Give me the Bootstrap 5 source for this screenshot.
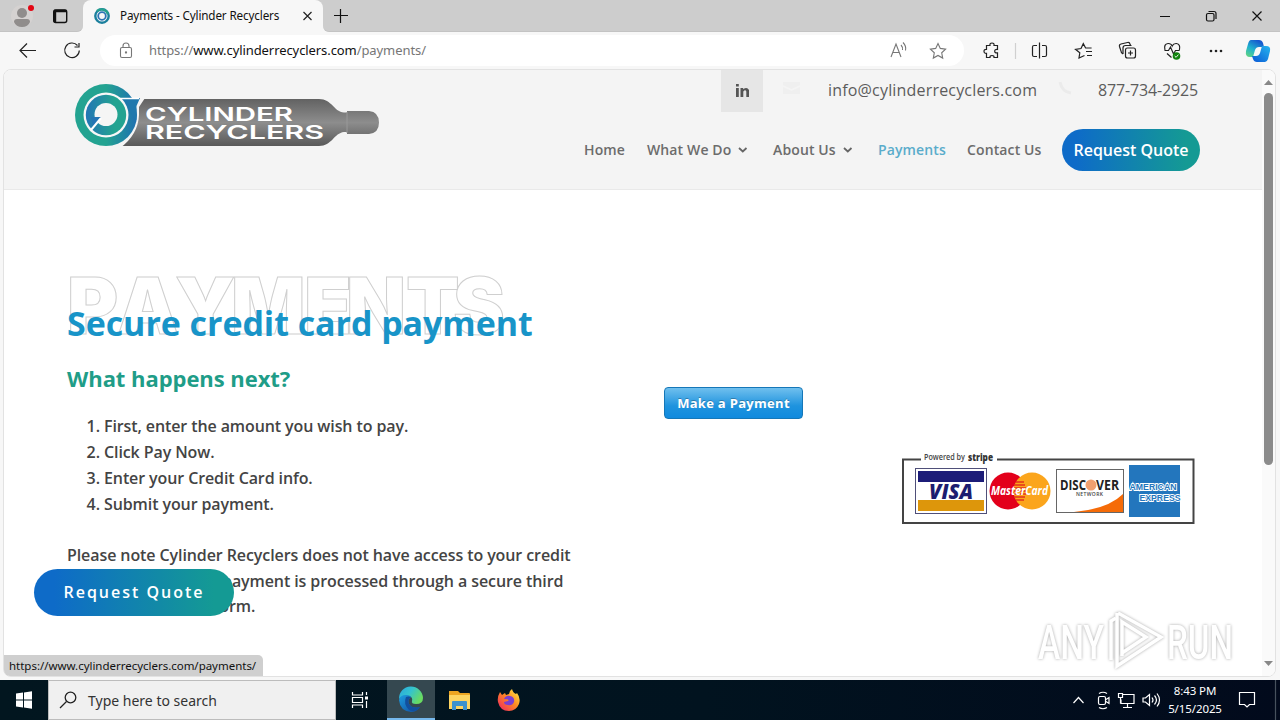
<!DOCTYPE html>
<html lang="en">

<head>
    <meta charset="UTF-8" />
    <meta name="viewport" content="width=device-width, initial-scale=1.0" />
    <title>Payments - Cylinder Recyclers</title>

    <link href="https://cdn.jsdelivr.net/npm/bootstrap@5.3.3/dist/css/bootstrap.min.css" rel="stylesheet">
    <style>
        body { width: 1280px; height: 720px; overflow: hidden; font-family: "Open Sans", "Noto Sans", sans-serif; background: #f7f7f7; color: #444; }
        svg { display: block; flex: none; overflow: visible; }
        .ui-text { font-family: "Noto Sans", "Open Sans", sans-serif; white-space: nowrap; }

        /* browser chrome */
        .tab-strip { height: 32px; background: #cdcdcd; flex: none; }
        .tab-left { width: 83px; border-radius: 0 0 6px 0; border-bottom: 1px solid #c3c3c3; background: #cdcdcd; }
        .tab-back { background: #f7f7f7; }
        .tab-active { width: 240px; background: #f7f7f7; border-radius: 8px 8px 0 0; color: #111; font-size: 11.7px; letter-spacing: -.14px; }
        .tab-title { width: 182px; }
        .tab-rest { border-radius: 0 0 0 6px; border-bottom: 1px solid #c3c3c3; background: #cdcdcd; }
        .tool-bar { height: 37px; flex: none; background: #f7f7f7; }
        .address { width: 864px; height: 31px; margin-top: 3px; border-radius: 16px; background: #fff; font-size: 13px; letter-spacing: -.08px; color: #767676; }
        .address b { font-weight: 400; color: #111; }
        .url { width: 742px; padding-top: 1px; }

        /* page frame */
        .frame { width: 1273px; height: 608px; margin-left: 3px; flex: none; border: 1px solid #e2e2e2; border-radius: 8px; background: #fff; overflow: hidden; }
        .page { width: 1258px; }
        .scroll { width: 13px; background: #fafafa; padding-top: 9px; }
        .scroll-thumb { width: 9px; height: 372px; border-radius: 5px; background: #8b8b8b; margin-top: 8px; margin-left: 2px; }
        .site-head { height: 120px; background: #f4f4f4; border-bottom: 1px solid #e9e9e9; }
        .logo-cell { width: 580px; flex: none; padding: 11px 0 0 69px; }
        .contact-bar { height: 42px; font-size: 16px; color: #5c5c5c; padding-left: 137px; white-space: nowrap; }
        .social { width: 42px; height: 42px; background: #e6e6e6; }
        .mail-text { width: 230px; letter-spacing: .18px; padding-bottom: 2px; }
        .phone-text { letter-spacing: -.15px; padding-bottom: 2px; }
        .menu { display: grid; grid-template-columns: 63px 126px 105px 89px 95px 138px; align-items: center; font-size: 14px; font-weight: 600; color: #6c6c6c; margin-top: 17px; white-space: nowrap; letter-spacing: .12px; }
        .menu > span:not(.pill) { padding-bottom: 2px; }
        .menu .current { color: #5aaccb; }
        .pill { background: linear-gradient(90deg, #0e6bc8 10%, #149a94 90%); color: #fff; border-radius: 30px; text-align: center; white-space: nowrap; }
        .pill-top { height: 42px; line-height: 42px; font-size: 16px; letter-spacing: 0; }
        .pill-float { position: absolute; left: 34px; top: 569px; width: 200px; height: 47px; line-height: 46px; font-size: 16px; letter-spacing: 2px; font-weight: 600; }

        .main-row { padding-left: 63px; padding-top: 77px; }
        .left-col { width: 597px; }
        .ghost-title { font-family: Inter, sans-serif; font-weight: 900; font-size: 78px; fill: none; stroke: #cfcfcf; stroke-width: 1px; }
        .blue-title { font-size: 34px; font-weight: 700; line-height: 40px; letter-spacing: -.06px; color: #1894c8; margin: -42px 0 0; white-space: nowrap; position: relative; }
        .green-title { font-size: 22px; font-weight: 700; line-height: 28px; letter-spacing: -.05px; color: #1f9d88; margin: 21px 0 0; }
        .steps { font-size: 16px; font-weight: 600; line-height: 26px; letter-spacing: -.1px; margin: 21px 0 0; padding-left: 37px; }
        .note { font-size: 16px; font-weight: 600; line-height: 25.6px; letter-spacing: -.09px; margin: 26px 0 0; width: 525px; }
        .pay-btn { width: 139px; height: 32px; line-height: 30px; margin-top: 120px; border: 1px solid #1577b8; border-radius: 4px; background: linear-gradient(#70c0ee, #1e93de 60%, #108ade); color: #fff; font-size: 13px; letter-spacing: .3px; font-weight: 700; text-align: center; text-shadow: 0 -1px 0 rgba(0, 0, 0, .25); padding: 0; }
        .cards-img { margin: 31px 0 0 237px; }
        .watermark { position: absolute; left: 1030px; top: 604px; filter: drop-shadow(0 0 1.5px #a8a8a8); }
        .link-hint { position: absolute; left: 4px; top: 655px; width: 259px; height: 21px; line-height: 21px; padding-left: 5px; background: #cfcfcf; border-radius: 0 5px 0 6px; font-size: 11.5px; letter-spacing: -.02px; color: #111; }

        /* taskbar */
        .task-bar { height: 40px; background: linear-gradient(90deg, #02161f, #01131f 55%, #020a1c); margin-top: 3px; flex: none; }
        .search-box { width: 288px; background: #f0f0f0; border: 1px solid #bcbcbc; color: #333; font-size: 14px; }
        .app-cell { width: 49px; }
        .app-on { width: 48px; background: #354850; border-bottom: 2px solid #76b9ed; }
        .clock { width: 66px; font-size: 11.5px; letter-spacing: -.1px; line-height: 18px; color: #fff; text-align: center; }
    </style>
</head>

<body class="d-flex flex-column">
    <div class="tab-strip d-flex">
        <div class="tab-back"><div class="tab-left h-100">
            <svg width="83" height="31" fill="none">
                <circle cx="22" cy="16" r="11" fill="#d5d2d1" />
                <circle cx="22" cy="13" r="5" fill="#908d8c" />
                <path d="M14 22q0-3 3-3h10q3 0 3 3-2 5-8 5t-8-5z" fill="#908d8c" />
                <circle cx="31" cy="8" r="3" fill="#e30613" />
                <rect x="53.700" y="10" width="13" height="12.500" rx="2" stroke="#111" stroke-width="1.400" />
                <path d="M54 11h12.500M55 11v11" stroke="#111" stroke-width="2.400" />
            </svg>
        </div></div>
        <div class="tab-active d-flex align-items-center ui-text">
            <svg width="37" height="32" fill="none">
                <circle cx="19" cy="16" r="6.700" stroke="#1b7f9d" stroke-width="2.400" />
                <path d="M14 11a7 7 0 0 1 11 3" stroke="#24a08f" stroke-width="2.400" />
                <circle cx="19" cy="16" r="3.800" stroke="#2c74b4" stroke-width="1.800" />
            </svg>
            <span class="tab-title">Payments - Cylinder Recyclers</span>
            <svg width="12" height="12" stroke="#222" stroke-width="1.200"><path d="M1.500 2l8 8m0-8l-8 8" /></svg>
        </div>
        <div class="tab-back flex-grow-1"><div class="tab-rest h-100">
            <svg width="957" height="31" fill="none" stroke="#111" stroke-width="1.200">
                <path d="M11 15.500h14M17.500 9v14M837 16.500h10M929.500 11.500l9 9m0-9l-9 9" />
                <rect x="883.500" y="13.500" width="7.500" height="7.500" rx="1.500" />
                <path d="M885.500 11.500h5.500q2 0 2 2v5.500" />
            </svg>
        </div></div>
    </div>

    <div class="tool-bar d-flex">
        <svg width="100" height="37" fill="none" stroke="#222" stroke-width="1.200">
            <path d="M36 18.500H20.500m6.500-7l-7 7 7 7" />
            <path d="M77.500 13.500a7.300 7.300 0 1 0 1.800 5M79 11v4h-4.500" />
        </svg>
        <div class="address d-flex align-items-center ui-text">
            <svg width="49" height="31" fill="none" stroke="#777" stroke-width="1.100">
                <rect x="20.500" y="12.500" width="11" height="10" rx="1.500" />
                <path d="M23 12.500V11a3 3 0 0 1 6 0v1.500" />
                <circle cx="26" cy="17.500" r=".6" fill="#777" />
            </svg>
            <span class="url">https://<b>www.cylinderrecyclers.com</b>/payments/</span>
            <svg width="73" height="31" fill="none" stroke="#777" stroke-width="1.100">
                <path d="M0 22l5-13 5 13M2 17.500h6M10 10q2 2 1.500 5M12 7.500q3.500 3.500 2.500 8" />
                <path d="M47 8.500l2.300 4.900 5.300.7-3.900 3.700 1 5.300-4.700-2.600-4.700 2.600 1-5.300-3.900-3.700 5.300-.7z" />
            </svg>
        </div>
        <svg width="316" height="37" fill="none" stroke="#222" stroke-width="1.200">
            <path d="M22.500 13.500h3.500q-.5-2.500 2-2.500t2 2.500h3.500v4q-2.800-.3-2.800 1.700t2.800 1.700v4.600H30q.3-2-2-2t-2 2h-3.500v-4.200q-2.500.2-2.500-2t2.500-2z" />
            <path d="M51.500 11v16" stroke="#d0d0d0" />
            <path d="M73 13.500h-3q-1.500 0-1.500 1.500v8q0 1.500 1.500 1.500h3M78 13.500h3q1.500 0 1.500 1.500v8q0 1.500-1.500 1.500h-3M75.500 10.500v16" />
            <path d="M120.500 23.500l-5.500 2.500.8-5.200-4.300-3.500 5.500-.8 2.300-4.800 2.300 4.300h6M122 19.500h6M123 23.500h5" />
            <rect x="161.500" y="16" width="10" height="10" rx="2" />
            <path d="M166.500 18.500v5M164 21h5M159 22q-2-1-2-3l-1.500-4.500q-.5-2 1.500-2.500l6.500-1.500q2-.5 2.500 1.500l.5 1.500M159 22v-6q0-2.500 2.500-2.500h6" />
            <path d="M201 18q-1.500-6 3-6.500 3-.2 4.200 2.500 1.300-2.700 4.200-2.500 4.400.6 3 6.500M200.500 18.500h4l2-3.500 3 7 2-3.500h4M203 21.500l4.500 4" />
            <circle cx="212.500" cy="24" r="3.800" fill="#11820e" stroke="none" />
            <path d="M210.700 24l1.400 1.300 2.300-2.700" stroke="#fff" stroke-width=".9" />
            <g fill="#222" stroke="none"><circle cx="247" cy="19" r="1.300" /><circle cx="252" cy="19" r="1.300" /><circle cx="257" cy="19" r="1.300" /></g>
            <defs>
                <linearGradient id="cpA" x1="0" y1="1" x2=".6" y2="0"><stop offset="0" stop-color="#69d878" /><stop offset=".5" stop-color="#20b2ce" /><stop offset="1" stop-color="#1659cf" /></linearGradient>
                <linearGradient id="cpB" x1="0" y1="1" x2="1" y2="0"><stop offset="0" stop-color="#0b58d5" /><stop offset="1" stop-color="#26b5ee" /></linearGradient>
            </defs>
            <path d="M287 8h8q3 0 4 3l1 4h-5q-3 0-4 3l-2 7h-3q-5 0-4-6l2-7q1-4 3-4z" fill="url(#cpA)" stroke="none" />
            <path d="M301 30h-8q-3 0-4-3l-1-3h4q3 0 4-3l2-7h4q5 0 4 5l-2 8q-1 3-3 3z" fill="url(#cpB)" stroke="none" />
        </svg>
    </div>

    <div class="frame d-flex">
        <main class="page">
            <header class="site-head d-flex">
                <div class="logo-cell">
                    <svg width="310" height="70" viewBox="73 81 310 70">
                        <defs>
                            <linearGradient id="tank" x1="0" y1="0" x2="0" y2="1"><stop offset="0" stop-color="#626262" /><stop offset=".5" stop-color="#8d8d8d" /><stop offset="1" stop-color="#595959" /></linearGradient>
                            <linearGradient id="ring" x1="0" y1="0" x2="1" y2="0"><stop offset=".5" stop-color="#23a391" /><stop offset="1" stop-color="#1f70b1" /></linearGradient>
                            <linearGradient id="ringIn" x1="0" y1="0" x2="1" y2="0"><stop offset="0" stop-color="#2375b5" /><stop offset=".7" stop-color="#23a391" /></linearGradient>
                        </defs>
                        <path d="M122 99H319C332 99 334 112 344 112.500H347V111H369Q379 112 379 122.500T369 134H347V132H344C334 133 332 146 319 146H122z" fill="url(#tank)" />
                        <path d="M347 112v21" stroke="#999" stroke-width="1" />
                        <path d="M106 82V148h14q18-13 19-33v-8l6-9-24-1z" fill="#f4f4f4" />
                        <path d="M125 146q13-11 15-29v-10l7-8h8v47z" fill="url(#tank)" />
                        <circle cx="106" cy="115" r="31" fill="url(#ring)" />
                        <path d="M121 98H140L136.500 106V120L128 110z" fill="#1f78ad" />
                        <circle cx="106" cy="115" r="22.500" fill="#f7f7f7" />
                        <path d="M119 98.500h20" stroke="#fff" stroke-width="1.500" />
                        <circle cx="106" cy="115" r="20.200" fill="url(#ringIn)" />
                        <circle cx="106" cy="114.500" r="11.500" fill="#f5f5f5" />
                        <path d="M91 117h10l-8 10z" fill="#2375b5" />
                        <path d="M91 130l10-12" stroke="#fff" stroke-width="2" />
                        <g fill="#fff" font-family="Inter, sans-serif" font-size="19" font-weight="600">
                            <text x="145" y="120.500" textLength="148" lengthAdjust="spacingAndGlyphs">CYLINDER</text>
                            <text x="145" y="138.500" textLength="179" lengthAdjust="spacingAndGlyphs">RECYCLERS</text>
                        </g>
                    </svg>
                </div>
                <div>
                    <div class="contact-bar d-flex align-items-center">
                        <div class="social"><svg width="42" height="42" fill="#555"><path d="M15 18h2.800v9H15zM15 14h2.800v2.500H15zM19.500 18h2.700v1.200q3.800-3 5.800.8v7h-2.700v-5.500q-1-2.700-3 0V27h-2.800z" /></svg></div>
                        <svg width="65" height="42" fill="#efefef"><path d="M20 12h17v3l-8.500 4-8.500-4zM20 17l8.500 4 8.500-4v7H20z" /></svg>
                        <span class="mail-text">info@cylinderrecyclers.com</span>
                        <svg width="40" height="42" fill="none" stroke="#ebebeb" stroke-width="3"><path d="M2 12q2 10 11 11" /></svg>
                        <span class="phone-text">877-734-2925</span>
                    </div>
                    <nav class="menu">
                        <span>Home</span>
                        <span class="d-flex align-items-center gap-2">What We Do <svg width="8" height="6" fill="none" stroke="#666" stroke-width="1.800"><path d="M0 2l3.800 3.500L7.500 2" /></svg></span>
                        <span class="d-flex align-items-center gap-2">About Us <svg width="8" height="6" fill="none" stroke="#666" stroke-width="1.800"><path d="M0 2l3.800 3.500L7.500 2" /></svg></span>
                        <span class="current">Payments</span>
                        <span>Contact Us</span>
                        <span class="pill pill-top">Request Quote</span>
                    </nav>
                </div>
            </header>

            <section class="main-row d-flex">
                <div class="left-col">
                    <svg class="ghost-title" width="450" height="78"><text x="0 50 108 164 237 279 339 386" y="67">PAYMENTS</text></svg>
                    <h1 class="blue-title">Secure credit card payment</h1>
                    <h2 class="green-title">What happens next?</h2>
                    <ol class="steps">
                        <li>First, enter the amount you wish to pay.</li>
                        <li>Click Pay Now.</li>
                        <li>Enter your Credit Card info.</li>
                        <li>Submit your payment.</li>
                    </ol>
                    <p class="note">Please note Cylinder Recyclers does not have access to your credit card numbers. Your payment is processed through a secure third party payment platform.</p>
                </div>
                <div>
                    <button type="button" class="pay-btn d-block">Make a Payment</button>
                    <svg class="cards-img" width="296" height="76" viewBox="901 450 296 76" font-family="Open Sans, sans-serif">
                        <path d="M921 459.500H903V523H1193.500V459.500H997" fill="none" stroke="#444" stroke-width="2" />
                        <text x="924" y="460" font-size="8.500" font-weight="600" fill="#444" textLength="41" lengthAdjust="spacingAndGlyphs">Powered by</text>
                        <text x="968" y="460.500" font-size="10.500" font-weight="800" fill="#333" textLength="25" lengthAdjust="spacingAndGlyphs">stripe</text>
                        <rect x="915.500" y="468.500" width="71" height="45" fill="#fff" stroke="#4f4f79" />
                        <path d="M918 471h66v11h-66z" fill="#1c1c78" />
                        <path d="M918 500h66v11h-66z" fill="#dd960b" />
                        <text x="929" y="498.500" font-size="21" font-weight="800" font-style="italic" fill="#1d1d70" textLength="44" lengthAdjust="spacingAndGlyphs">VISA</text>
                        <circle cx="1008" cy="491" r="18.500" fill="#e3001b" />
                        <circle cx="1032" cy="491" r="18.500" fill="#fba51c" />
                        <path d="M1016 482h8M1014 485h11M1014 488h12M1014 491h12M1014 494h12M1014 497h11M1016 500h8" stroke="#e3301b" stroke-width="1.500" />
                        <text x="991" y="495" font-size="11.500" font-weight="700" font-style="italic" fill="#fff" textLength="57" lengthAdjust="spacingAndGlyphs">MasterCard</text>
                        <rect x="1056.500" y="469.500" width="67" height="43" fill="#fff" stroke="#666" />
                        <path d="M1074 512q34-3 49-18v18z" fill="#f56b08" />
                        <circle cx="1091" cy="485" r="5.500" fill="#f0a070" />
                        <text x="1060" y="490" font-size="14" font-weight="700" fill="#222" textLength="26" lengthAdjust="spacingAndGlyphs">DISC</text>
                        <text x="1096" y="490" font-size="14" font-weight="700" fill="#222" textLength="23" lengthAdjust="spacingAndGlyphs">VER</text>
                        <text x="1076" y="496" font-size="5" font-weight="600" fill="#444" textLength="27">NETWORK</text>
                        <path d="M1129 465h51v52h-51z" fill="#2376bd" />
                        <g font-family="Liberation Sans, sans-serif" font-size="9" font-weight="700" fill="#2376bd" stroke="#fff" stroke-width="1.800" paint-order="stroke">
                            <text x="1129.500" y="490" textLength="47" lengthAdjust="spacingAndGlyphs">AMERICAN</text>
                            <text x="1139.500" y="501" textLength="41" lengthAdjust="spacingAndGlyphs">EXPRESS</text>
                        </g>
                    </svg>
                </div>
            </section>
        </main>
        <div class="scroll">
            <svg width="13" height="6" fill="#888"><path d="M2 6l4.500-5L11 6z" /></svg>
            <div class="scroll-thumb"></div>
            <svg width="13" height="202" fill="#888"><path d="M2 196l4.500 5 4.500-5z" /></svg>
        </div>
    </div>

    <footer class="task-bar d-flex">
        <svg width="48" height="40" fill="#fff"><path d="M16 13.500l7-1v7h-7zM24 12.400l8-1.100v8.200h-8zM16 20.500h7v7l-7-1zM24 20.500h8v8.200l-8-1.100z" /></svg>
        <div class="search-box d-flex align-items-center ui-text">
            <svg width="39" height="38" fill="none" stroke="#222" stroke-width="1.300"><circle cx="21.500" cy="16.500" r="5.300" /><path d="M17.500 20.500L11 27" /></svg>
            <span>Type here to search</span>
        </div>
        <svg width="51" height="40" fill="none" stroke="#fff" stroke-width="1.200"><path d="M16.500 12v3h10v-3M16.500 28v-3h10v3M16.500 17.500h10v5h-10zM30.500 12v3M30.500 21v7" /><path d="M29 16.500h3v3h-3z" fill="#fff" stroke="none" /></svg>
        <div class="app-on">
            <svg width="48" height="38">
                <defs>
                    <linearGradient id="edTop" x1="0" y1="0" x2="1" y2=".5"><stop offset="0" stop-color="#2aa6dd" /><stop offset=".5" stop-color="#34c3cf" /><stop offset="1" stop-color="#69db61" /></linearGradient>
                    <linearGradient id="edLow" x1="0" y1="0" x2="1" y2="1"><stop offset="0" stop-color="#1d9ce0" /><stop offset="1" stop-color="#114a9c" /></linearGradient>
                </defs>
                <path d="M12 19a12 12 0 0 1 24-1q0 6-7 6-5 0-4-3 1-4-3-5-6-1-10 3z" fill="url(#edTop)" />
                <path d="M12 20q1-5 7-5 4 0 5 2-4 3-2 7 3 5 11 3-3 5-9 5-11-1-12-12z" fill="url(#edLow)" />
                <path d="M19 17q-3 7 3 13 6 3 11-3-8 2-11-3-2-4 2-7-3-1-5 0z" fill="#124f9e" />
            </svg>
        </div>
        <div class="app-cell"><svg width="49" height="40"><path d="M14 11h9l2 2h9q1 0 1 1v14H14z" fill="#eca522" /><path d="M14 15h21v14H14z" fill="#fcd462" /><path d="M17 22q0-1 1-1h13q1 0 1 1v8h-4v-4h-7v4h-4z" fill="#3b91cd" /></svg></div>
        <div class="app-cell flex-grow-1">
            <svg width="49" height="40">
                <defs><linearGradient id="fox" x1="1" y1="0" x2="0" y2="1"><stop offset="0" stop-color="#fff44a" /><stop offset=".45" stop-color="#ff8b22" /><stop offset="1" stop-color="#ed1c67" /></linearGradient></defs>
                <path d="M16 12l2 3 3-2 1 2 3-1q0-3 3-5 1 4 4 5l1-1q4 5 2 11-3 7-10 7-9 0-11-9-1-5 2-10z" fill="url(#fox)" />
                <path d="M20 19q2-4 6-3 5 1 4 6-2 4-6 3-4 0-4-3l4-1q2-2-4-2z" fill="#7b3fd0" />
            </svg>
        </div>
        <svg width="97" height="40" viewBox="-7 0 97 40" fill="none" stroke="#fff" stroke-width="1.200">
            <path d="M1.500 23l5-5.500 5 5.500" />
            <rect x="26.500" y="16.500" width="7" height="8" rx="1.500" />
            <path d="M34 19.500l3-2v6l-3-2M27 13.500q4-2.500 8 0M27 27.500q4 2.500 8 0" />
            <path d="M51 14.500h11v9H49v-4M55.500 24v3M51 27.500h9M46.500 13.500h4v4h-4zM48.500 17.500v6" />
            <path d="M71 18h2.500l4-3.500v11l-4-3.500H71zM80 17.500q2 2.500 0 5M82.500 15.500q4 4.500 0 9M85 13.500q5 6.500 0 13" />
        </svg>
        <div class="clock ui-text d-flex flex-column justify-content-center"><span>8:43 PM</span><span>5/15/2025</span></div>
        <svg width="52" height="40" fill="none" stroke="#fff" stroke-width="1.200"><path d="M11.500 12.500h15v12h-5l-2.500 2.500-2.500-2.500h-5z" /><path d="M47.500 0v40" stroke="#47515d" /></svg>
    </footer>

    <div class="pill pill-float">Request Quote</div>
    <div class="link-hint ui-text">https://www.cylinderrecyclers.com/payments/</div>
    <svg class="watermark" width="210" height="72" fill="#fff" font-family="Roboto, sans-serif" font-size="48" font-weight="500">
        <text x="8" y="55" textLength="66" lengthAdjust="spacingAndGlyphs">ANY</text>
        <text x="137" y="55" textLength="66" lengthAdjust="spacingAndGlyphs">RUN</text>
        <g fill="none" stroke="#fff" stroke-width="3.500">
            <path d="M88 9l43 24-44 29V9" />
            <path d="M81 56V17l5-3M92 52V18l24 15-24 16" />
        </g>
    </svg>

    <script src="https://cdn.jsdelivr.net/npm/bootstrap@5.3.3/dist/js/bootstrap.bundle.min.js"></script>
</body>

</html>
